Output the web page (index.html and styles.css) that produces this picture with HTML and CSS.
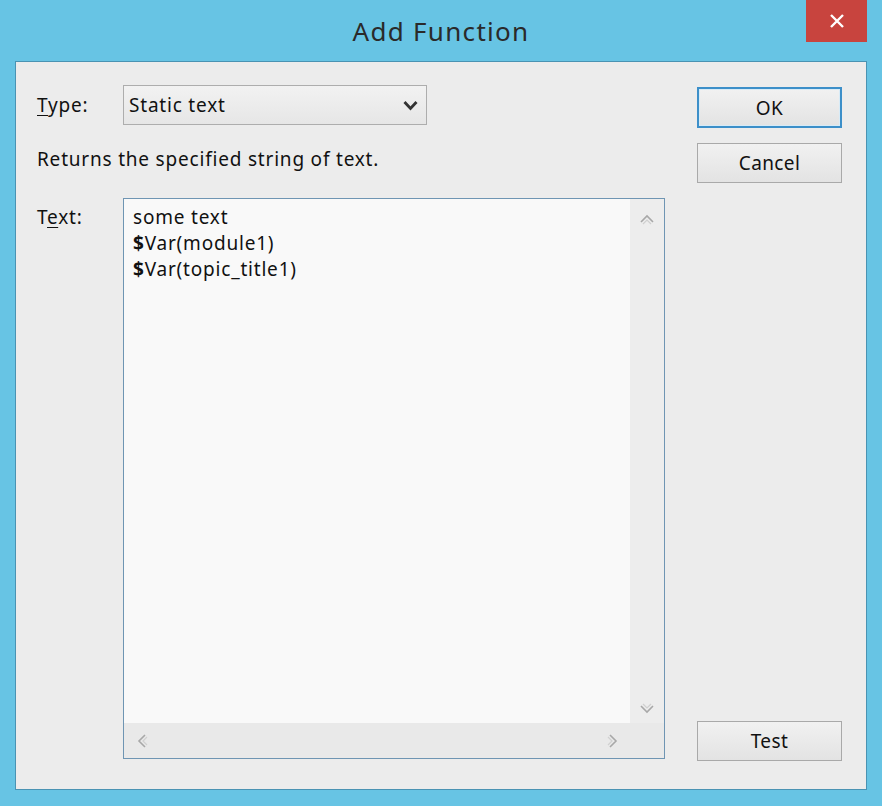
FILE: index.html
```html
<!DOCTYPE html>
<html>
<head>
<meta charset="utf-8">
<link rel="stylesheet" href="styles.css">
</head>
<body>
<div class="window">
  <div class="titlebar">
    <div class="title">Add Function</div>
    <div class="close">
      <svg width="16" height="16" viewBox="0 0 16 16"><path d="M2 2 L14 14 M14 2 L2 14" stroke="#fff" stroke-width="2.4" fill="none"/></svg>
    </div>
  </div>
  <div class="client">
    <div class="main">
      <div class="row type-row">
        <label class="lbl"><u>T</u>ype:</label>
        <div class="combo">
          <span>Static text</span>
          <svg class="chev" width="15" height="11" viewBox="0 0 15 11"><path d="M1.5 2 L7.5 8.5 L13.5 2" stroke="#333" stroke-width="2.8" fill="none"/></svg>
        </div>
      </div>
      <div class="desc">Returns the specified string of text.</div>
      <div class="row text-row">
        <label class="lbl">T<u>e</u>xt:</label>
        <div class="textbox">
          <div class="content">
            <div class="editor">some text<br><b class="d">$</b>Var(module1)<br><b class="d">$</b>Var(topic_title1)</div>
            <div class="vscroll">
              <svg width="16" height="12" viewBox="0 0 16 12"><path d="M2 9 L8 3 L14 9" stroke="#a8a8a8" stroke-width="1.6" fill="none"/><path d="M4 11 L8 7 L12 11" stroke="#d0d0d0" stroke-width="1.2" fill="none"/></svg>
              <svg width="16" height="12" viewBox="0 0 16 12"><path d="M2 3 L8 9 L14 3" stroke="#a8a8a8" stroke-width="1.6" fill="none"/><path d="M4 1 L8 5 L12 1" stroke="#d0d0d0" stroke-width="1.2" fill="none"/></svg>
            </div>
          </div>
          <div class="hscroll">
            <svg width="12" height="16" viewBox="0 0 12 16"><path d="M9 2 L3 8 L9 14" stroke="#a8a8a8" stroke-width="1.6" fill="none"/><path d="M11 4 L7 8 L11 12" stroke="#d0d0d0" stroke-width="1.2" fill="none"/></svg>
            <svg width="12" height="16" viewBox="0 0 12 16"><path d="M3 2 L9 8 L3 14" stroke="#a8a8a8" stroke-width="1.6" fill="none"/><path d="M1 4 L5 8 L1 12" stroke="#d0d0d0" stroke-width="1.2" fill="none"/></svg>
            <div class="corner"></div>
          </div>
        </div>
      </div>
    </div>
    <div class="buttons">
      <button class="btn default">OK</button>
      <button class="btn cancel">Cancel</button>
      <div class="spacer"></div>
      <button class="btn test">Test</button>
    </div>
  </div>
</div>
</body>
</html>
```

FILE: styles.css
```css
html, body {
  margin: 0;
  padding: 0;
}
body {
  width: 882px;
  height: 806px;
  background: #66c3e3;
  font-family: "Noto Sans", "Open Sans", "DejaVu Sans", sans-serif;
  color: #111;
  overflow: hidden;
}
.window {
  width: 882px;
  height: 806px;
  display: flex;
  flex-direction: column;
  background: #67c4e4;
}
.titlebar {
  height: 61px;
  position: relative;
  display: flex;
  justify-content: center;
}
.title {
  margin-top: 13px;
  font-size: 26px;
  color: #2a2a2a;
  letter-spacing: 1.3px;
  height: 36px;
  line-height: 36px;
}
.close {
  position: absolute;
  right: 15px;
  top: 0;
  width: 61px;
  height: 42px;
  background: #c8443e;
  display: flex;
  align-items: center;
  justify-content: center;
}
.client {
  margin: 0 15px 16px 15px;
  height: 729px;
  box-sizing: border-box;
  background: #ececec;
  border: 1px solid #4a93b3;
  display: flex;
  padding: 23px 24px 28px 21px;
  letter-spacing: 0.8px;
}
.main {
  width: 628px;
  display: flex;
  flex-direction: column;
}
.row {
  display: flex;
}
.lbl {
  width: 86px;
  font-size: 19px;
  color: #111;
}
.lbl u {
  text-decoration-thickness: 1px;
  text-underline-offset: 3px;
}
.type-row {
  height: 40px;
  align-items: center;
}
.combo {
  width: 304px;
  height: 40px;
  box-sizing: border-box;
  border: 1px solid #adadad;
  background: linear-gradient(#f2f2f2, #e6e6e6);
  display: flex;
  align-items: center;
  justify-content: space-between;
  padding: 0 8px 0 5px;
  font-size: 19px;
}
.desc {
  font-size: 19px;
  margin-top: 21px;
  height: 26px;
  line-height: 26px;
}
.text-row {
  margin-top: 26px;
}
.text-row .lbl {
  padding-top: 6px;
}
.textbox {
  width: 542px;
  height: 561px;
  box-sizing: border-box;
  border: 1px solid #6f95b3;
  display: flex;
  flex-direction: column;
  background: #e8e8e8;
}
.content {
  flex: 1;
  display: flex;
}
.editor {
  flex: 1;
  background: #f9f9f9;
  font-size: 19px;
  line-height: 26px;
  padding: 5px 9px;
  color: #111;
}
.editor .d {
  font-weight: 700;
}
.vscroll {
  width: 34px;
  background: #ededed;
  display: flex;
  flex-direction: column;
  justify-content: space-between;
  align-items: center;
  padding: 14px 0 8px;
}
.hscroll {
  height: 35px;
  display: flex;
  align-items: center;
  background: #e9e9e9;
  padding-left: 12px;
}
.hscroll svg:nth-child(2) {
  margin-left: auto;
  margin-right: 0;
}
.corner {
  width: 45px;
}
.buttons {
  width: 145px;
  margin-left: 32px;
  display: flex;
  flex-direction: column;
  padding-top: 2px;
}
.btn {
  font-family: inherit;
  font-size: 19px;
  letter-spacing: 0.4px;
  color: #111;
  width: 145px;
  height: 40px;
  border: 1px solid #a9a9a9;
  background: linear-gradient(#f1f1f1, #e3e3e3);
  padding: 0;
  margin: 0;
}
.btn.default {
  height: 41px;
  border: 2px solid #3c8fc9;
  box-shadow: inset 0 0 0 1px #d7ebf7;
}
.btn.cancel {
  margin-top: 15px;
}
.spacer {
  flex: 1;
}
```
